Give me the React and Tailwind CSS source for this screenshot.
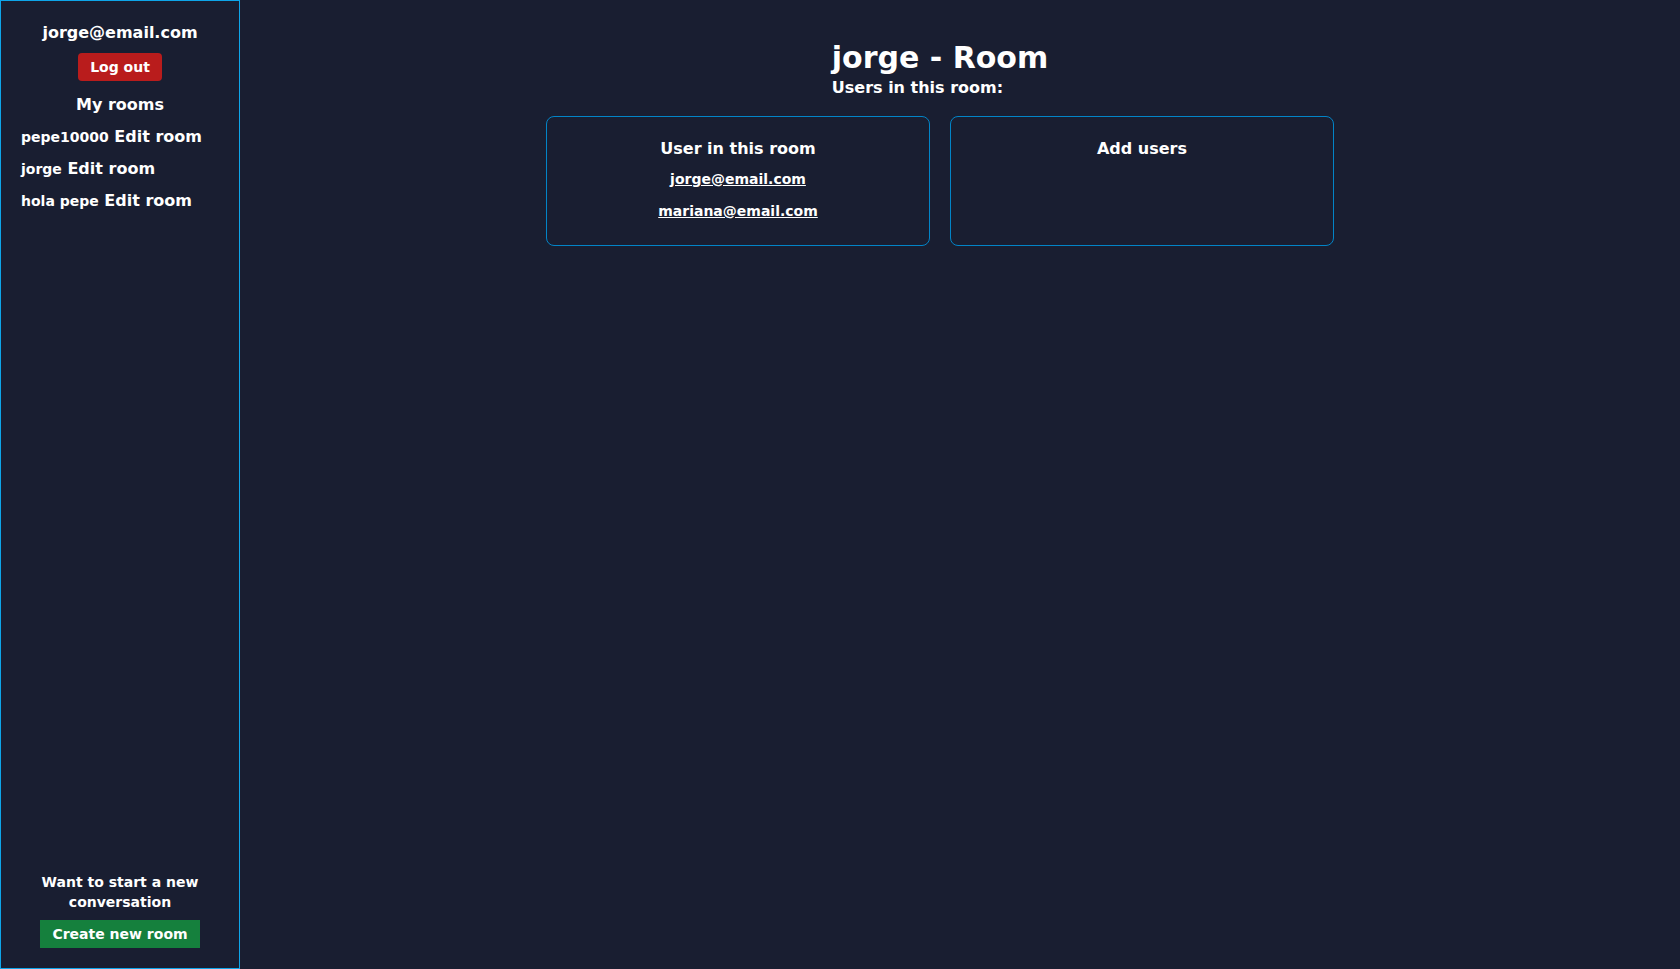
import { useState } from 'react'

const rooms = [
  { id: 1, name: 'pepe10000' },
  { id: 2, name: 'jorge' },
  { id: 3, name: 'hola pepe' },
]

const roomUsers = ['jorge@email.com', 'mariana@email.com']

function Sidebar({ email, onLogout }) {
  return (
    <aside className="w-[240px] h-full shrink-0 flex flex-col justify-between border border-[#0ea5e9] p-5">
      <div className="flex flex-col items-center">
        <p className="text-base">{email}</p>
        <button onClick={onLogout} className="mt-2 bg-[#b91c1c] text-white text-sm px-3 py-1 rounded">Log out</button>
        <h2 className="mt-3 text-base">My rooms</h2>
        <ul className="mt-2 w-full flex flex-col gap-2">
          {rooms.map(r => (
            <li key={r.id} className="leading-6">
              <span className="text-sm">{r.name}</span>{' '}
              <button className="text-base">Edit room</button>
            </li>
          ))}
        </ul>
      </div>
      <div className="flex flex-col items-center">
        <p className="text-sm text-center">Want to start a new conversation</p>
        <button className="mt-2 bg-[#15803d] text-white text-sm px-3 py-1">Create new room</button>
      </div>
    </aside>
  )
}

export default function App(){
  const [email] = useState('jorge@email.com')

  return (
    <div className="flex h-screen overflow-hidden bg-[#191e31] text-white font-bold" style={{ fontFamily: '"DejaVu Sans", sans-serif' }}>
      <Sidebar email={email} onLogout={() => {}} />
      <main className="flex-1 flex flex-col items-center pt-10 pr-10">
        <div className="text-left">
          <h1 className="text-3xl">jorge - Room</h1>
          <h3 className="text-base">Users in this room:</h3>
        </div>
        <div className="mt-4 grid grid-cols-2 gap-5">
          <section className="w-96 border border-[#0284c7] rounded-lg pt-5 pb-6 flex flex-col items-center">
            <h2 className="text-base">User in this room</h2>
            <div className="mt-2 flex flex-col items-center gap-3">
              {roomUsers.map(u => (
                <a key={u} href="#" className="text-sm underline">{u}</a>
              ))}
            </div>
          </section>
          <section className="w-96 border border-[#0284c7] rounded-lg pt-5 pb-6 flex flex-col items-center">
            <h2 className="text-base">Add users</h2>
          </section>
        </div>
      </main>
    </div>
  )
}
